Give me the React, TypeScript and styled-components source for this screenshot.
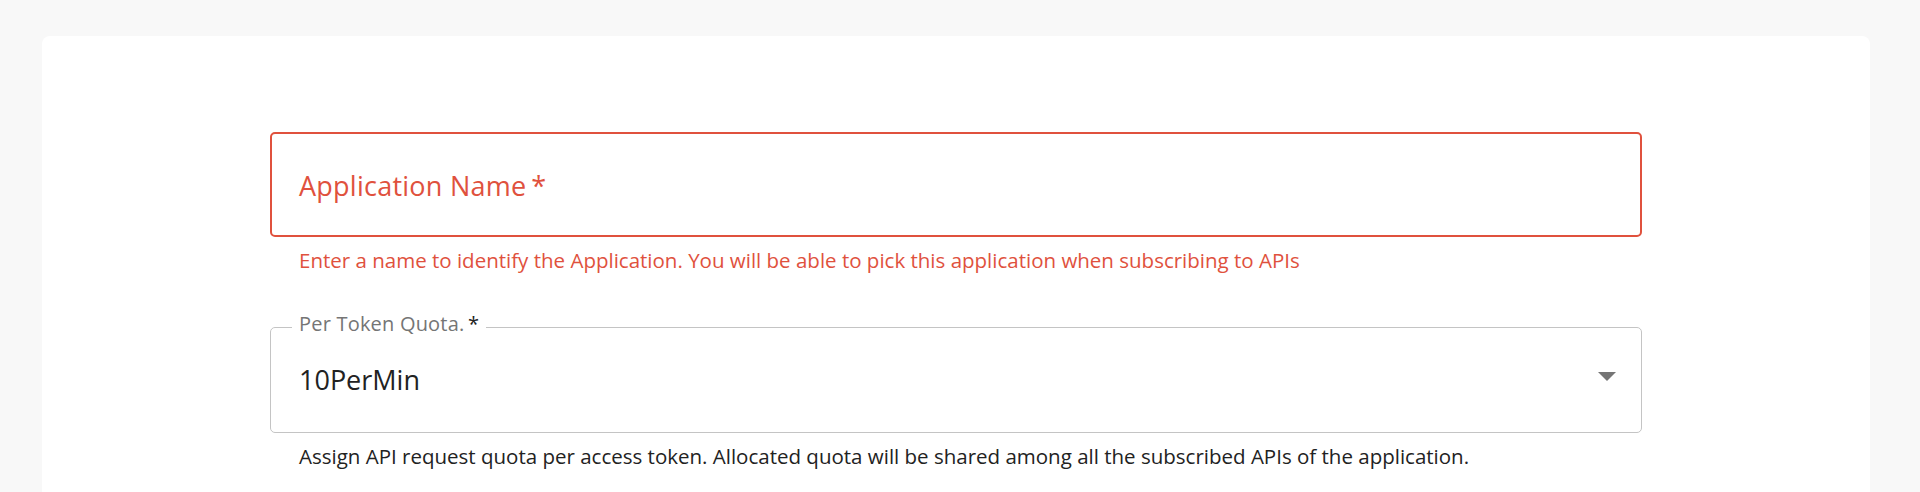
import React from 'react';
import styled, { createGlobalStyle } from 'styled-components';

const GlobalStyle = createGlobalStyle`
  body {
    margin: 0;
    background: #f8f8f8;
    font-family: "Open Sans", "Noto Sans", sans-serif;
  }
`;

const ERROR = '#e0513d';

const Page = styled.div`
  padding: 36px 50px 0 42px;
  min-height: 492px;
  box-sizing: border-box;
`;

const Card = styled.div`
  background: #ffffff;
  border-radius: 8px 8px 0 0;
  padding: 96px 228px 40px;
  min-height: 456px;
  box-sizing: border-box;
`;

const Form = styled.form`
  display: flex;
  flex-direction: column;
  gap: 40px;
`;

const Field = styled.div`
  display: flex;
  flex-direction: column;
`;

const ErrorBox = styled.div`
  box-sizing: border-box;
  height: 105px;
  border: 2px solid ${ERROR};
  border-radius: 5px;
  padding: 33px 27px 0;
`;

const FloatLabel = styled.label<{ error?: boolean }>`
  font-size: 27px;
  line-height: normal;
  letter-spacing: 0.25px;
  color: ${(p) => (p.error ? ERROR : '#757575')};
`;

const Asterisk = styled.span<{ error?: boolean }>`
  color: ${(p) => (p.error ? ERROR : '#222222')};
`;

const Outline = styled.fieldset`
  margin: 0;
  padding: 0 21px;
  border: 1px solid #c4c4c4;
  border-radius: 5px;
  min-width: 0;
`;

const Legend = styled.legend`
  padding: 0 7px 6px;
  font-size: 20px;
  line-height: 20px;
  letter-spacing: 0.2px;
  color: #757575;
`;

const SelectRow = styled.div`
  height: 92px;
  box-sizing: border-box;
  padding: 21px 4px 0 7px;
  display: flex;
  align-items: flex-start;
`;

const Value = styled.span`
  font-size: 27px;
  line-height: normal;
  color: #222222;
`;

const Caret = styled.svg`
  margin: 11px 0 0 auto;
  width: 18px;
  height: 9px;
  fill: #757575;
`;

const Helper = styled.p<{ error?: boolean }>`
  margin: 10px 0 0 29px;
  font-size: 20.5px;
  line-height: 27px;
  color: ${(p) => (p.error ? ERROR : '#222222')};
`;

export default function App() {
  return (
    <>
      <GlobalStyle />
      <Page>
        <Card>
          <Form>
            <Field>
              <ErrorBox>
                <FloatLabel error>
                  Application Name<Asterisk error>&thinsp;*</Asterisk>
                </FloatLabel>
              </ErrorBox>
              <Helper error>
                Enter a name to identify the Application. You will be able to pick this application when subscribing to APIs
              </Helper>
            </Field>
            <Field>
              <Outline>
                <Legend>
                  Per Token Quota.<Asterisk>&thinsp;*</Asterisk>
                </Legend>
                <SelectRow>
                  <Value>10PerMin</Value>
                  <Caret viewBox="0 0 18 9">
                    <path d="M0 0h18L9 9z" />
                  </Caret>
                </SelectRow>
              </Outline>
              <Helper>
                Assign API request quota per access token. Allocated quota will be shared among all the subscribed APIs of the application.
              </Helper>
            </Field>
          </Form>
        </Card>
      </Page>
    </>
  );
}
